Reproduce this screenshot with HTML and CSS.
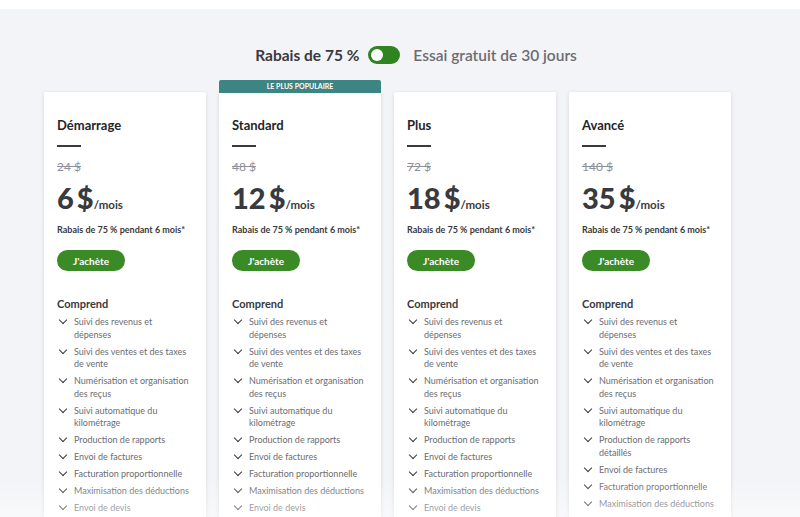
FILE: index.html
```html
<!DOCTYPE html>
<html lang="fr">
<head>
  <meta charset="UTF-8">
  <title>Forfaits</title>
  <link rel="stylesheet" href="styles.css">
</head>
<body>

  <div class="topbar"></div>

  <div class="page">
    <!-- Choix de l'offre -->
    <div class="switch-row">
      <span class="switch-on">Rabais de 75 %</span>
      <span class="toggle"><span class="knob"></span></span>
      <span class="switch-off">Essai gratuit de 30 jours</span>
    </div>

    <div class="plans">

      <div class="plan">
        <h2 class="plan-name">Démarrage</h2>
        <div class="dash"></div>
        <div class="old-price">24 $</div>
        <div class="price">6<span class="cur">$</span><span class="per">/mois</span></div>
        <p class="promo">Rabais de 75 % pendant 6 mois*</p>
        <button class="buy">J'achète</button>
        <h3 class="inc">Comprend</h3>
        <ul class="features">
          <li>Suivi des revenus et dépenses</li>
          <li>Suivi des ventes et des taxes de vente</li>
          <li>Numérisation et organisation des reçus</li>
          <li>Suivi automatique du kilométrage</li>
          <li>Production de rapports</li>
          <li>Envoi de factures</li>
          <li>Facturation proportionnelle</li>
          <li>Maximisation des déductions</li>
          <li>Envoi de devis</li>
        </ul>
      </div>

      <div class="plan popular">
        <div class="badge">LE PLUS POPULAIRE</div>
        <h2 class="plan-name">Standard</h2>
        <div class="dash"></div>
        <div class="old-price">48 $</div>
        <div class="price">12<span class="cur">$</span><span class="per">/mois</span></div>
        <p class="promo">Rabais de 75 % pendant 6 mois*</p>
        <button class="buy">J'achète</button>
        <h3 class="inc">Comprend</h3>
        <ul class="features">
          <li>Suivi des revenus et dépenses</li>
          <li>Suivi des ventes et des taxes de vente</li>
          <li>Numérisation et organisation des reçus</li>
          <li>Suivi automatique du kilométrage</li>
          <li>Production de rapports</li>
          <li>Envoi de factures</li>
          <li>Facturation proportionnelle</li>
          <li>Maximisation des déductions</li>
          <li>Envoi de devis</li>
        </ul>
      </div>

      <div class="plan">
        <h2 class="plan-name">Plus</h2>
        <div class="dash"></div>
        <div class="old-price">72 $</div>
        <div class="price">18<span class="cur">$</span><span class="per">/mois</span></div>
        <p class="promo">Rabais de 75 % pendant 6 mois*</p>
        <button class="buy">J'achète</button>
        <h3 class="inc">Comprend</h3>
        <ul class="features">
          <li>Suivi des revenus et dépenses</li>
          <li>Suivi des ventes et des taxes de vente</li>
          <li>Numérisation et organisation des reçus</li>
          <li>Suivi automatique du kilométrage</li>
          <li>Production de rapports</li>
          <li>Envoi de factures</li>
          <li>Facturation proportionnelle</li>
          <li>Maximisation des déductions</li>
          <li>Envoi de devis</li>
        </ul>
      </div>

      <div class="plan">
        <h2 class="plan-name">Avancé</h2>
        <div class="dash"></div>
        <div class="old-price">140 $</div>
        <div class="price">35<span class="cur">$</span><span class="per">/mois</span></div>
        <p class="promo">Rabais de 75 % pendant 6 mois*</p>
        <button class="buy">J'achète</button>
        <h3 class="inc">Comprend</h3>
        <ul class="features">
          <li>Suivi des revenus et dépenses</li>
          <li>Suivi des ventes et des taxes de vente</li>
          <li>Numérisation et organisation des reçus</li>
          <li>Suivi automatique du kilométrage</li>
          <li>Production de rapports détaillés</li>
          <li>Envoi de factures</li>
          <li>Facturation proportionnelle</li>
          <li>Maximisation des déductions</li>
        </ul>
      </div>

    </div>
  </div>

  <div class="fade"></div>

</body>
</html>
```

FILE: styles.css
```css
html, body {
  margin: 0;
  height: 100%;
  overflow: hidden;
}
body {
  background-color: #f3f4f7;
  font-family: Lato, "Noto Sans", Arial, sans-serif;
  color: #393a3d;
}
.topbar {
  height: 9px;
  background-color: #ffffff;
}
.page {
  padding: 0 0 0 44px;
}
.switch-row {
  display: flex;
  align-items: center;
  justify-content: center;
  gap: 9px;
  margin-top: 36px;
  height: 20px;
  font-size: 15.5px;
  padding-right: 12px;
}
.switch-on {
  font-weight: 700;
  color: #393a3d;
}
.switch-off {
  font-weight: 600;
  color: #6b6c72;
  margin-left: 4px;
}
.toggle {
  width: 32px;
  height: 18px;
  border-radius: 9px;
  background-color: #2e8520;
  position: relative;
  display: inline-block;
}
.knob {
  position: absolute;
  left: 3px;
  top: 3px;
  width: 12px;
  height: 12px;
  border-radius: 50%;
  background-color: #ffffff;
}
.plans {
  display: flex;
  gap: 13px;
  margin-top: 27px;
}
.plan {
  width: 162px;
  box-sizing: border-box;
  background-color: #ffffff;
  border-radius: 2px;
  box-shadow: 0 1px 4px rgba(0, 0, 0, 0.12);
  padding: 24px 16px 0 13px;
  height: 460px;
  position: relative;
}
.popular {
  border-top-left-radius: 0;
  border-top-right-radius: 0;
}
.badge {
  position: absolute;
  left: 0;
  right: 0;
  top: -12px;
  height: 13px;
  background-color: #3d8583;
  color: #ffffff;
  font-size: 7px;
  font-weight: 700;
  text-align: center;
  line-height: 13px;
  border-radius: 2px 2px 0 0;
}
.plan-name {
  margin: 0;
  font-size: 13px;
  font-weight: 700;
  line-height: 18px;
  color: #242528;
}
.dash {
  width: 24px;
  height: 2px;
  background-color: #393a3d;
  margin-top: 11px;
}
.old-price {
  margin-top: 12px;
  font-size: 12px;
  color: #8d9096;
  text-decoration: line-through;
  line-height: 16px;
}
.price {
  margin-top: 7px;
  font-size: 29px;
  font-weight: 900;
  line-height: 32px;
  color: #393a3d;
}
.cur {
  margin-left: 3px;
}
.per {
  font-size: 11.5px;
  font-weight: 700;
}
.promo {
  margin: 3px 0 0;
  font-size: 9px;
  font-weight: 700;
  line-height: 12px;
  color: #393a3d;
  white-space: nowrap;
}
.buy {
  margin-top: 14px;
  width: 68px;
  height: 21px;
  border: none;
  border-radius: 11px;
  background-color: #3a8a26;
  color: #ffffff;
  font-family: inherit;
  font-size: 10px;
  font-weight: 700;
  padding: 0;
  cursor: pointer;
}
.inc {
  margin: 26px 0 0;
  font-size: 11px;
  font-weight: 700;
  line-height: 14px;
  color: #393a3d;
}
.features {
  list-style: none;
  margin: 5px 0 0;
  padding: 0;
}
.features li {
  position: relative;
  padding-left: 17px;
  font-size: 9px;
  line-height: 12.5px;
  color: #6b6c72;
  margin-bottom: 4.5px;
}
.features li::before {
  content: "";
  position: absolute;
  left: 3px;
  top: 1px;
  width: 5px;
  height: 5px;
  border-right: 1.7px solid #393a3d;
  border-bottom: 1.7px solid #393a3d;
  transform: rotate(45deg);
}
.fade {
  position: absolute;
  left: 0;
  right: 0;
  bottom: 0;
  height: 40px;
  background: linear-gradient(to bottom, rgba(255, 255, 255, 0), rgba(255, 255, 255, 0.45));
  pointer-events: none;
}
```
